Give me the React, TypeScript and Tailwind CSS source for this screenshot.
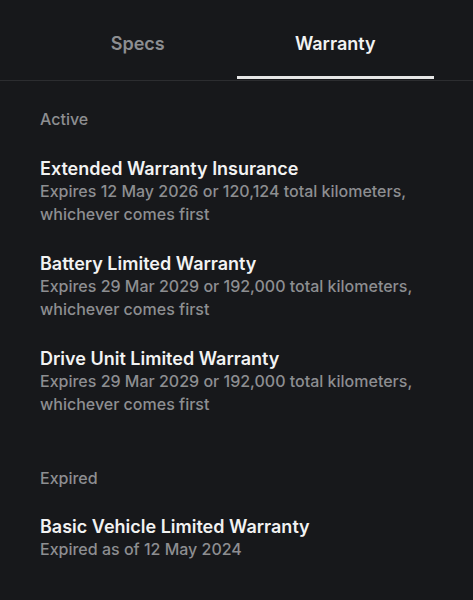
import { useState } from 'react';

type Warranty = {
  title: string;
  detail: string;
};

const active: Warranty[] = [
  {
    title: 'Extended Warranty Insurance',
    detail: 'Expires 12 May 2026 or 120,124 total kilometers, whichever comes first',
  },
  {
    title: 'Battery Limited Warranty',
    detail: 'Expires 29 Mar 2029 or 192,000 total kilometers, whichever comes first',
  },
  {
    title: 'Drive Unit Limited Warranty',
    detail: 'Expires 29 Mar 2029 or 192,000 total kilometers, whichever comes first',
  },
];

const expired: Warranty[] = [
  { title: 'Basic Vehicle Limited Warranty', detail: 'Expired as of 12 May 2024' },
];

const Item = ({ item, className }: { item: Warranty; className: string }) => (
  <div className={className}>
    <p className="text-[18px] leading-[22px] font-semibold text-[#f2f2f2]">{item.title}</p>
    <p className="text-[16px] leading-[23px] font-medium text-[#8d8e91]">{item.detail}</p>
  </div>
);

const App = () => {
  const [tab, setTab] = useState<'specs' | 'warranty'>('warranty');

  return (
    <div
      className="min-h-[600px] w-full bg-[#17181b]"
      style={{ fontFamily: 'Inter, "Noto Sans", sans-serif' }}
    >
      <div className="flex h-[81px] border-b border-[#2c2d30] px-[39px]">
        {(['specs', 'warranty'] as const).map((t) => (
          <button
            key={t}
            onClick={() => setTab(t)}
            className={`relative flex-1 text-[18px] font-semibold ${
              tab === t ? 'text-[#f2f2f2]' : 'text-[#8d8e91]'
            }`}
          >
            <span className="relative top-[3px]">{t === 'specs' ? 'Specs' : 'Warranty'}</span>
            {tab === t && (
              <span className="absolute left-0 right-0 bottom-[1px] h-[3px] bg-[#e6e6e6]" />
            )}
          </button>
        ))}
      </div>

      <div className="px-[40px] pt-[28px] pb-[40px]">
        <p className="text-[16px] leading-[20px] font-medium text-[#8d8e91]">Active</p>
        {active.map((w, i) => (
          <Item key={w.title} item={w} className={i === 0 ? 'mt-[29px]' : 'mt-[27px]'} />
        ))}

        <p className="mt-[52px] text-[16px] leading-[20px] font-medium text-[#8d8e91]">Expired</p>
        {expired.map((w) => (
          <Item key={w.title} item={w} className="mt-[28px]" />
        ))}
      </div>
    </div>
  );
};

export default App;
